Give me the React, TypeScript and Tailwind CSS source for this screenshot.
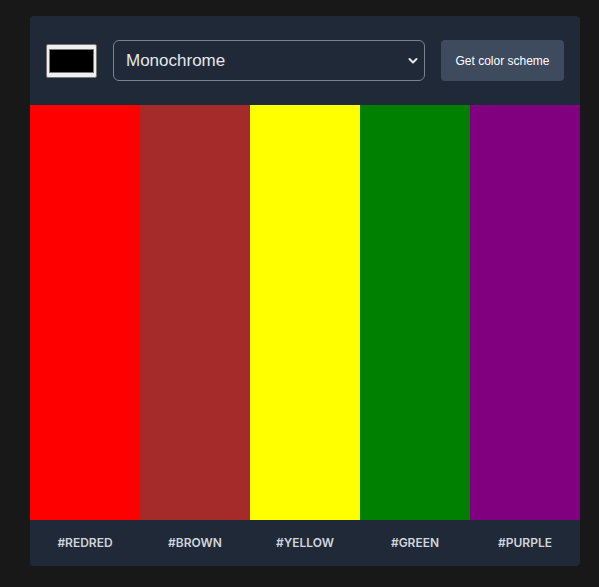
const colors = [
  { hex: '#ff0000', label: '#REDRED' },
  { hex: '#a52a2a', label: '#BROWN' },
  { hex: '#ffff00', label: '#YELLOW' },
  { hex: '#008000', label: '#GREEN' },
  { hex: '#800080', label: '#PURPLE' },
];

const App = () => {
  return (
    <div className="min-h-screen bg-[#181818] pt-4 pl-[30px]" style={{ fontFamily: 'Inter, "Liberation Sans", sans-serif' }}>
      <div className="w-[550px] rounded bg-[#1f2937] overflow-hidden">
        <header className="flex items-center gap-4 px-4 py-6">
          <div className="w-[51px] h-[34px] bg-[#efefef] border border-[#767676] rounded-[2px] p-[2px] flex items-center justify-center">
            <div className="w-[45px] h-[24px] bg-black border border-[#777]" />
          </div>
          <div className="relative flex-1">
            <select
              className="w-full h-[41px] appearance-none rounded-md border border-[#7b8290] bg-[#1f2937] pl-3 pr-8 text-[17px] text-[#e5e7eb] outline-none"
              style={{ fontFamily: '"Liberation Sans", Arial, sans-serif' }}
              defaultValue="monochrome"
            >
              <option value="monochrome">Monochrome</option>
            </select>
            <svg className="absolute right-[7px] top-1/2 -translate-y-1/2 pointer-events-none" width="10" height="8" viewBox="0 0 10 8">
              <path d="M1.5 2 L5 5.5 L8.5 2" fill="none" stroke="#e5e7eb" strokeWidth="2" strokeLinecap="round" strokeLinejoin="round" />
            </svg>
          </div>
          <button
            className="w-[123px] h-[41px] rounded-[4px] bg-[#3e4a5d] text-white text-[12px] font-medium"
            style={{ fontFamily: '"Liberation Sans", Arial, sans-serif' }}
          >
            Get color scheme
          </button>
        </header>
        <div className="grid grid-cols-5 h-[415px]">
          {colors.map(c => (
            <div key={c.label} style={{ backgroundColor: c.hex }} />
          ))}
        </div>
        <footer className="grid grid-cols-5 h-[46px] items-center">
          {colors.map(c => (
            <span key={c.label} className="text-center text-[12px] font-semibold text-[#d1d5db]">{c.label}</span>
          ))}
        </footer>
      </div>
    </div>
  );
};

export default App;
